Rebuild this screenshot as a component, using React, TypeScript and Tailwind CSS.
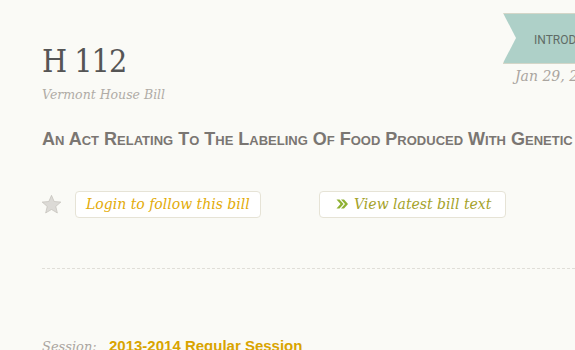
import React from 'react';

const serif = "font-['DejaVu_Serif','Liberation_Serif',serif]";
const sans = "font-['Liberation_Sans',Arial,sans-serif]";

function Star() {
  return (
    <svg width="21" height="21" viewBox="0 0 24 24" className="shrink-0">
      <path d="M12 1.5l3.1 7.1 7.6.6-5.8 5 1.8 7.5L12 17.7l-6.7 4 1.8-7.5-5.8-5 7.6-.6z" fill="#dcdad6" stroke="#bdbab4" strokeWidth="0.7" />
    </svg>
  );
}

function Chevrons() {
  return (
    <svg width="12" height="10" viewBox="0 0 12 10" className="shrink-0">
      <path d="M0.5 0.5h3l4 4.5-4 4.5h-3l4-4.5z M5 0.5h3l4 4.5-4 4.5h-3l4-4.5z" fill="#8fb133" />
    </svg>
  );
}

export default function App() {
  return (
    <div className="w-[575px] h-[350px] overflow-hidden bg-[#fafaf6]">
      <div className="flex">
        <div className="w-[503px] shrink-0 pl-[42px] pt-[41px]">
          <h1 className={`font-['DejaVu_Serif_Condensed','DejaVu_Serif',serif] text-[32px] leading-[40px] text-[#555] tracking-[-1px]`}>H 112</h1>
          <p className={`${serif} italic text-[12.5px] text-[#b0aca6] mt-[5px]`}>Vermont House Bill</p>
        </div>
        <div className="shrink-0 pt-[13px]">
          <div className="relative h-[51px] w-[140px] bg-[#aed0c8] border border-[#d4d6c8]">
            <div className="absolute left-[-1px] top-[-1px] w-0 h-0 border-t-[25px] border-b-[25px] border-l-[13px] border-t-transparent border-b-transparent border-l-[#fafaf6]" />
            <span className="font-['Roboto',sans-serif] absolute left-[30px] top-[17px] text-[12px] text-[#5f6b66]">INTRODUCED</span>
          </div>
          <p className={`${serif} italic text-[14px] text-[#aaa5a0] pl-[12px] mt-[2px] whitespace-nowrap`}>Jan 29, 2013</p>
        </div>
      </div>

      <h2 className={`${sans} font-bold text-[18px] text-[#7a7672] [font-variant:small-caps] pl-[42px] mt-[21px] whitespace-nowrap`}>
        An Act Relating To The Labeling Of Food Produced With Genetic Engineering
      </h2>

      <div className="flex items-center pl-[41px] mt-[38px]">
        <Star />
        <a className={`${serif} italic text-[14px] whitespace-nowrap text-[#e3ab07] ml-[13px] w-[186px] h-[27px] flex items-center pl-[10px] bg-white border border-[#e6e3d6] rounded-[4px]`}>
          Login to follow this bill
        </a>
        <a className={`${serif} italic text-[14px] whitespace-nowrap text-[#a5a22a] ml-[58px] w-[187px] h-[27px] flex items-center gap-[6px] pl-[16px] bg-white border border-[#e6e3d6] rounded-[4px]`}>
          <Chevrons />
          View latest bill text
        </a>
      </div>

      <div className="ml-[42px] mt-[50px] border-t border-dashed border-[#e0ded8]" />

      <div className="flex items-baseline pl-[42px] mt-[66px]">
        <span className={`${serif} italic text-[13px] text-[#aaa5a0] w-[67px]`}>Session:</span>
        <span className={`${sans} font-bold text-[15px] text-[#d9a400]`}>2013-2014 Regular Session</span>
      </div>
    </div>
  );
}
